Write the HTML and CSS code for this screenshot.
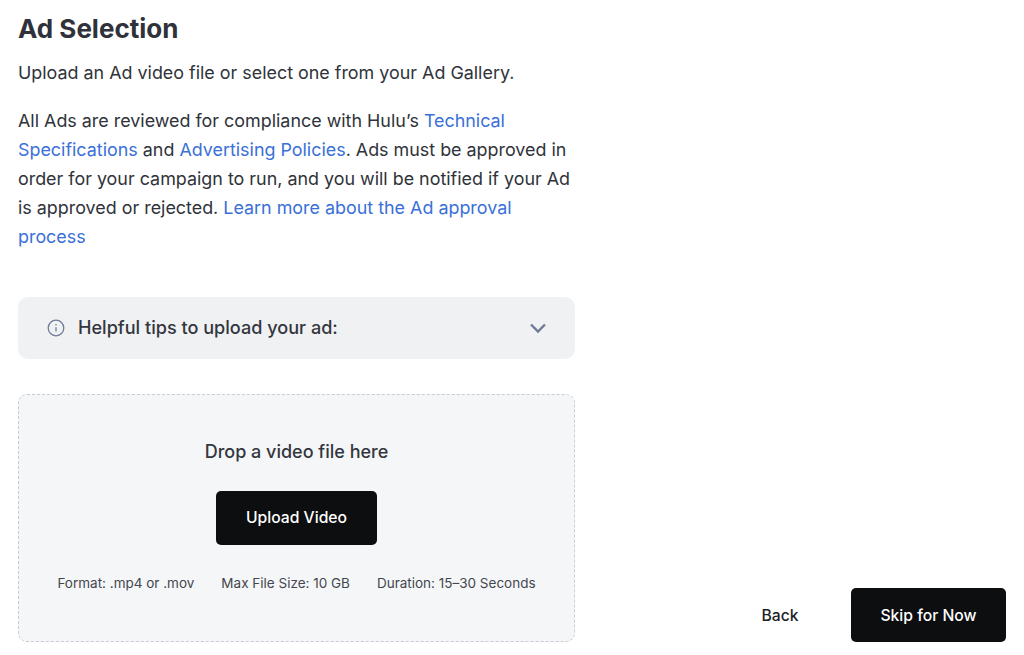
FILE: index.html
```html
<!DOCTYPE html>
<html lang="en">
<head>
<meta charset="utf-8">
<title>Ad Selection</title>
<link rel="stylesheet" href="styles.css">
</head>
<body>
<main class="page">
  <section class="content">
    <h1 class="title">Ad Selection</h1>
    <p class="lead">Upload an Ad video file or select one from your Ad Gallery.</p>
    <p class="body-text">All Ads are reviewed for compliance with Hulu’s <a href="#">Technical Specifications</a> and <a href="#">Advertising Policies</a>. Ads must be approved in order for your campaign to run, and you will be notified if your Ad is approved or rejected. <a href="#">Learn more about the Ad approval process</a></p>
    <div class="tips">
      <svg class="info" viewBox="0 0 18 18" width="18" height="18" aria-hidden="true"><circle cx="9" cy="9" r="7.8" fill="none" stroke="#6f7a98" stroke-width="1.3"/><path d="M9 8.2v4.4" stroke="#6f7a98" stroke-width="1.3" fill="none"/><circle cx="9" cy="5.8" r=".8" fill="#6f7a98"/></svg>
      <span class="tips-label">Helpful tips to upload your ad:</span>
      <svg class="chev" viewBox="0 0 18 12" width="18" height="12" aria-hidden="true"><path d="M2 2.5l7 7 7-7" fill="none" stroke="#6f7a98" stroke-width="2.4"/></svg>
    </div>
    <div class="drop">
      <div class="drop-title">Drop a video file here</div>
      <button class="btn upload">Upload Video</button>
      <div class="specs"><span>Format: .mp4 or .mov</span><span>Max File Size: 10 GB</span><span>Duration: 15–30 Seconds</span></div>
    </div>
  </section>
  <footer class="actions">
    <button class="back">Back</button>
    <button class="btn skip">Skip for Now</button>
  </footer>
</main>
</body>
</html>
```
FILE: styles.css
```css
* { box-sizing: border-box; }
html, body { margin: 0; height: 100%; background: #fff; }
body { font-family: Inter, "Liberation Sans", sans-serif; color: #30333a; overflow: hidden; }
.page { display: flex; height: 655px; padding: 0 18px 13px; }
.content { width: 557px; flex: none; display: flex; flex-direction: column; }
.title { margin: 12px 0 0; font-size: 26px; line-height: 34px; font-weight: 700; color: #2f323a; }
.lead { margin: 12px 0 0; font-size: 17.9px; line-height: 29px; }
.body-text { margin: 19px 0 0; font-size: 17.9px; line-height: 29px; }
.body-text a { color: #3a70d8; text-decoration: none; }
.tips { margin-top: 46px; height: 62px; background: #f0f1f3; border-radius: 10px; display: flex; align-items: center; padding: 0 28px 0 29px; }
.tips-label { margin-left: 13px; flex: 1; font-size: 18.1px; line-height: 24px; padding-bottom: 1px; font-weight: 500; color: #33363e; }
.drop { margin-top: 35px; height: 250px; background: #f5f6f8; border: 1px dashed #c9cbd9; border-radius: 9px; display: flex; flex-direction: column; align-items: center; padding-top: 45px; }
.drop-title { font-size: 18px; line-height: 24px; font-weight: 500; color: #33363e; }
.btn { background: #0d0e10; color: #fff; border: 0; border-radius: 5px; font: 500 15.7px Inter, "Liberation Sans", sans-serif; }
.upload { margin-top: 27px; width: 161px; height: 54px; padding-top: 1px; }
.specs { margin-top: 29px; display: flex; gap: 27px; font-size: 13.5px; line-height: 18px; color: #44474e; }
.actions { flex: 1; display: flex; justify-content: flex-end; align-items: flex-end; gap: 53px; }
.back { background: none; border: 0; padding: 0; height: 54px; width: 36px; font: 500 15.7px Inter, "Liberation Sans", sans-serif; color: #1d1f24; white-space: nowrap; display: flex; align-items: center; justify-content: center; }
.skip { width: 155px; height: 54px; }
```
